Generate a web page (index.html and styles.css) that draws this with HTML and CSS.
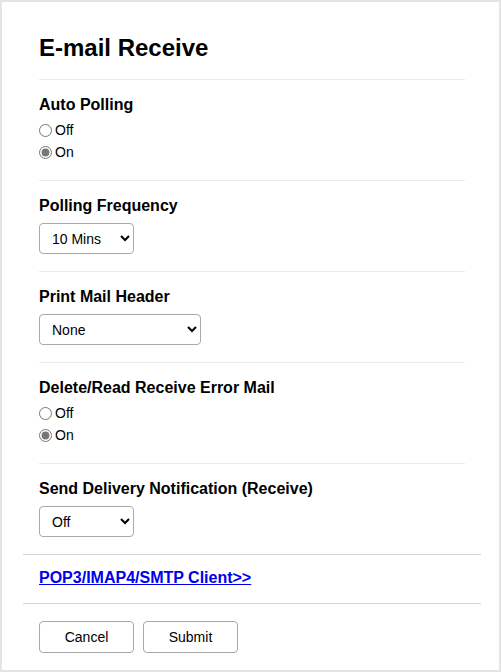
FILE: index.html
```html
<!DOCTYPE html>
<html lang="en">
<head>
<meta charset="UTF-8">
<meta name="viewport" content="width=device-width, initial-scale=1.0">
<title>E-mail Receive</title>
<link rel="stylesheet" href="styles.css">
</head>
<body>

<div class="page">
  <h1 class="heading">E-mail Receive</h1>

  <div class="section">
    <div class="label">Auto Polling</div>
    <label class="radio"><input type="radio" name="autoPolling" value="off">Off</label>
    <label class="radio"><input type="radio" name="autoPolling" value="on" checked>On</label>
  </div>

  <div class="section">
    <div class="label">Polling Frequency</div>
    <select class="select small">
      <option>10 Mins</option>
      <option>1 Min</option>
      <option>3 Mins</option>
      <option>30 Mins</option>
      <option>60 Mins</option>
    </select>
  </div>

  <div class="section">
    <div class="label">Print Mail Header</div>
    <select class="select wide">
      <option>None</option>
      <option>Subject+From+To</option>
      <option>All</option>
    </select>
  </div>

  <div class="section">
    <div class="label">Delete/Read Receive Error Mail</div>
    <label class="radio"><input type="radio" name="errorMail" value="off">Off</label>
    <label class="radio"><input type="radio" name="errorMail" value="on" checked>On</label>
  </div>

  <div class="section last">
    <div class="label">Send Delivery Notification (Receive)</div>
    <select class="select small">
      <option>Off</option>
      <option>On</option>
      <option>MDN</option>
    </select>
  </div>

  <div class="links">
    <a href="#">POP3/IMAP4/SMTP Client&gt;&gt;</a>
  </div>

  <div class="buttons">
    <button type="button" class="button">Cancel</button>
    <button type="button" class="button">Submit</button>
  </div>
</div>

</body>
</html>
```

FILE: styles.css
```css
body {
  font-family: "Liberation Sans", Arial, sans-serif;
  margin: 0;
  padding: 2px;
  background-color: #e4e4e4;
  color: #000;
}

.page {
  background-color: #fff;
  height: 668px;
  padding-top: 32px;
  box-sizing: border-box;
}

.heading {
  margin: 0 34px 0 37px;
  padding-bottom: 17px;
  font-size: 24px;
  line-height: 28px;
  border-bottom: 1px solid #ebebeb;
}

.section {
  margin: 0 34px 0 37px;
  padding: 15px 0 17px;
  border-bottom: 1px solid #ebebeb;
}

.section.last {
  border-bottom: none;
}

.label {
  font-size: 16px;
  line-height: 20px;
  font-weight: bold;
  margin-bottom: 4px;
}

.radio {
  display: flex;
  align-items: center;
  height: 22px;
  font-size: 14px;
}

.radio input {
  width: 13px;
  height: 13px;
  margin: 0 3px 0 0;
  accent-color: #777;
}

/* label margin (4) + 3 more */
.section .select {
  margin-top: 7px;
}

.select {
  display: block;
  height: 31px;
  border: 1px solid #a9a9a9;
  border-radius: 4px;
  background-color: #fff;
  font-family: "Liberation Sans", Arial, sans-serif;
  font-size: 14px;
  padding: 0 6px 0 8px;
  color: #000;
}

.select.small {
  width: 95px;
}

.select.wide {
  width: 162px;
}

.links {
  margin: 0 18px 0 21px;
  padding: 13px 16px 15px;
  border-top: 1px solid #d4d4d4;
  border-bottom: 1px solid #d4d4d4;
  font-size: 16px;
  line-height: 20px;
  font-weight: bold;
}

.links a {
  color: #0000ee;
}

.buttons {
  display: flex;
  gap: 9px;
  margin: 17px 0 0 37px;
}

.button {
  width: 95px;
  height: 32px;
  border: 1px solid #a9a9a9;
  border-radius: 4px;
  background-color: #fff;
  font-family: "Liberation Sans", Arial, sans-serif;
  font-size: 14px;
  color: #000;
}
```
